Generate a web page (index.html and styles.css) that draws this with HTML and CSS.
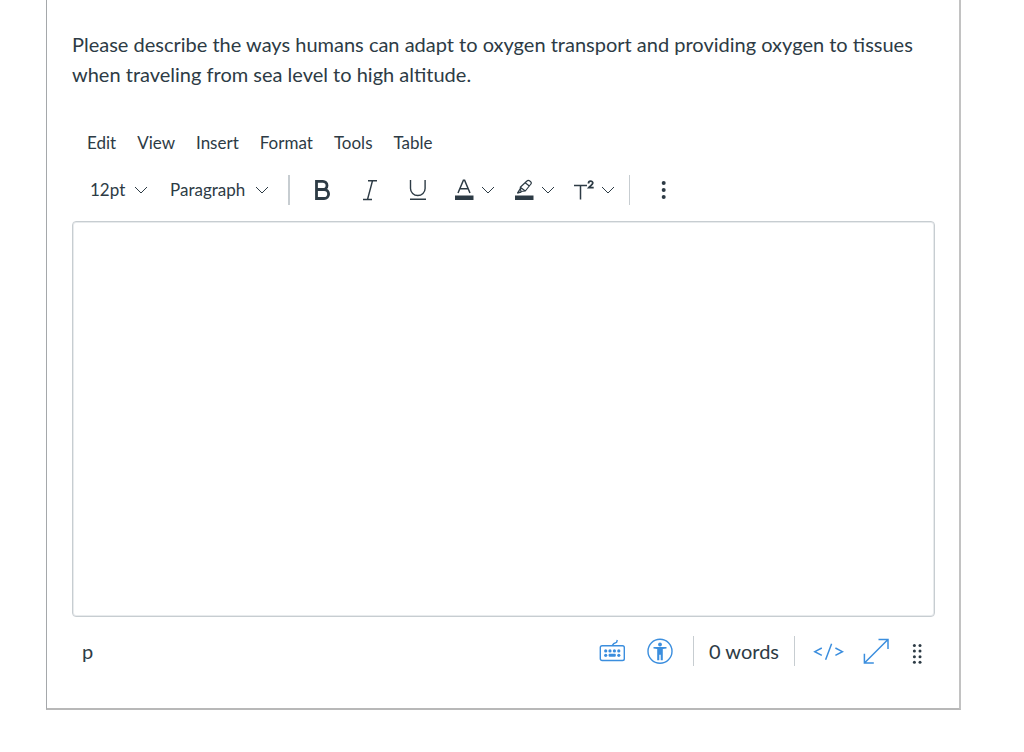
FILE: index.html
```html
<!DOCTYPE html>
<html lang="en">
<head>
    <meta charset="UTF-8">
    <meta name="viewport" content="width=device-width, initial-scale=1.0">
    <title>Essay Question</title>
    <link rel="stylesheet" href="styles.css">
</head>
<body>
    <main class="question">
        <p class="question-text" id="prompt">Please describe the ways humans can adapt to oxygen transport and providing oxygen to tissues when traveling from sea level to high altitude.</p>

        <div class="menubar">
            <button type="button">Edit</button>
            <button type="button">View</button>
            <button type="button">Insert</button>
            <button type="button">Format</button>
            <button type="button">Tools</button>
            <button type="button">Table</button>
        </div>

        <div class="toolbar">
            <label class="picker picker-size">
                <select aria-label="Font size">
                    <option>10pt</option>
                    <option selected>12pt</option>
                    <option>14pt</option>
                    <option>18pt</option>
                </select>
                <svg class="chevron" width="14" height="8" viewBox="0 0 14 8"><path d="M1 1l6 6 6-6"/></svg>
            </label>
            <label class="picker picker-block">
                <select aria-label="Block style">
                    <option selected>Paragraph</option>
                    <option>Heading 2</option>
                    <option>Heading 3</option>
                </select>
                <svg class="chevron" width="14" height="8" viewBox="0 0 14 8"><path d="M1 1l6 6 6-6"/></svg>
            </label>

            <span class="divider divider-wide"></span>

            <button type="button" class="tool" aria-label="Bold">
                <svg width="20" height="22" viewBox="0 0 20 22"><path d="M4.5 2.3h6.4a4 4 0 0 1 0 8.2H4.5zM4.5 10.5h7.6a4.4 4.4 0 0 1 0 9H4.5z" fill="none" stroke="#2d3b45" stroke-width="2.8"/></svg>
            </button>
            <button type="button" class="tool" aria-label="Italic">
                <svg width="20" height="22" viewBox="0 0 20 22"><path d="M8 1.7h9M3 20.5h9M12.5 1.7l-5 18.8" fill="none" stroke="#2d3b45" stroke-width="1.4"/></svg>
            </button>
            <button type="button" class="tool" aria-label="Underline">
                <svg width="20" height="22" viewBox="0 0 20 22"><path d="M2.5 1v8.5a7.3 7 0 0 0 14.6 0V1M2 20.3h16" fill="none" stroke="#2d3b45" stroke-width="1.4"/></svg>
            </button>

            <button type="button" class="tool-split" aria-label="Text color">
                <svg width="20" height="22" viewBox="0 0 20 22"><path d="M4 14L9.4 1.3h1.2L16 14M6 9.7h8" fill="none" stroke="#2d3b45" stroke-width="1.5"/><path d="M1 16.5h18.5V21H1z" fill="#2d3b45"/></svg>
                <svg class="chevron" width="14" height="8" viewBox="0 0 14 8"><path d="M1 1l6 6 6-6"/></svg>
            </button>
            <button type="button" class="tool-split" aria-label="Highlight color">
                <svg width="20" height="22" viewBox="0 0 20 22"><path d="M6.3 8.2l6.6-6.2c1.7-1.7 5.6 1.1 4 3L11.3 12l-4.4.5zM6.3 8.2l5 3.8M11.2 3.8l4.4 3.4M6.3 9.6l-2.6 4.2 3.7-.7" fill="none" stroke="#2d3b45" stroke-width="1.2" stroke-linejoin="round"/><path d="M3 14.4l1.6-2.6 2.2 2z" fill="#2d3b45"/><path d="M1 16.5h18.5V21H1z" fill="#2d3b45"/></svg>
                <svg class="chevron" width="14" height="8" viewBox="0 0 14 8"><path d="M1 1l6 6 6-6"/></svg>
            </button>
            <button type="button" class="tool-split" aria-label="Superscript">
                <svg width="20" height="22" viewBox="0 0 20 22"><path d="M0 6.6h13M6.5 6.6v13.8" fill="none" stroke="#2d3b45" stroke-width="1.5"/><path d="M14.5 4.4c0-3 4.3-2.8 4.3-.4 0 1.7-2.7 2.9-4.1 4.7h5" fill="none" stroke="#2d3b45" stroke-width="1.8"/></svg>
                <svg class="chevron" width="14" height="8" viewBox="0 0 14 8"><path d="M1 1l6 6 6-6"/></svg>
            </button>

            <span class="divider"></span>

            <button type="button" class="tool" aria-label="More">
                <svg width="6" height="20" viewBox="0 0 6 20" fill="#2d3b45"><circle cx="3.7" cy="3" r="2"/><circle cx="3.7" cy="10" r="2"/><circle cx="3.7" cy="17" r="2"/></svg>
            </button>
        </div>

        <textarea class="editor" aria-labelledby="prompt"></textarea>

        <div class="statusbar">
            <span class="path">p</span>
            <button type="button" class="tool" aria-label="Keyboard shortcuts">
                <svg width="26" height="26" viewBox="0 0 26 26" class="blue"><rect x="1.3" y="7.7" width="24" height="14.8" rx="1.8" fill="none" stroke-width="1.4"/><path d="M13.3 7.5l1.5-2 2.8-1.2L18.3 2" fill="none" stroke-width="1.4"/><g class="fill"><circle cx="6.7" cy="12.9" r="1.6"/><circle cx="11" cy="12.9" r="1.6"/><circle cx="15.4" cy="12.9" r="1.6"/><circle cx="19.8" cy="12.9" r="1.6"/><circle cx="6.7" cy="17.3" r="1.6"/><rect x="9.6" y="15.8" width="7.2" height="3" rx="1"/><circle cx="19.8" cy="17.3" r="1.6"/></g></svg>
            </button>
            <button type="button" class="tool" aria-label="Accessibility checker">
                <svg width="26" height="26" viewBox="0 0 26 26" class="blue"><circle cx="13" cy="13.3" r="12" fill="none" stroke-width="1.4"/><circle cx="13" cy="6.5" r="1.9" class="fill"/><path d="M6.5 9h13v1.4l-3.7.7v11.2h-2.1v-5.6h-1.4v5.6h-2.1V11.1l-3.7-.7z" class="fill"/></svg>
            </button>
            <span class="divider"></span>
            <span class="words">0 words</span>
            <span class="divider"></span>
            <button type="button" class="tool" aria-label="HTML editor">
                <svg width="32" height="18" viewBox="0 0 32 18" class="blue"><path d="M9.8 6L2.8 9.7l7 3.7M19.6 1.7l-6 16M23.4 6l7 3.7-7 3.7" fill="none" stroke-width="1.5"/></svg>
            </button>
            <button type="button" class="tool" aria-label="Fullscreen">
                <svg width="26" height="26" viewBox="0 0 26 26" class="blue"><path d="M1.7 24.8l23-23M15.5 1.5h9.5v9.5M1.4 15.7v9.4h9.4" fill="none" stroke-width="1.5"/></svg>
            </button>
            <button type="button" class="resize" aria-label="Resize">
                <svg width="10" height="22" viewBox="0 0 10 22" fill="#2d3b45"><circle cx="2.4" cy="3.4" r="1.5"/><circle cx="8" cy="3.4" r="1.5"/><circle cx="2.4" cy="9" r="1.5"/><circle cx="8" cy="9" r="1.5"/><circle cx="2.4" cy="14.7" r="1.5"/><circle cx="8" cy="14.7" r="1.5"/><circle cx="2.4" cy="20.3" r="1.5"/><circle cx="8" cy="20.3" r="1.5"/></svg>
            </button>
        </div>
    </main>
</body>
</html>
```
FILE: styles.css
```css
* {
    box-sizing: border-box;
}
body {
    margin: 0;
    background: #ffffff;
    color: #2d3b45;
    font-family: Lato, "Liberation Sans", sans-serif;
    font-size: 20px;
}
button, select {
    background: none;
    border: none;
    padding: 0;
    margin: 0;
    color: inherit;
    font-family: inherit;
    cursor: pointer;
}
svg {
    display: block;
    flex: none;
}
.question {
    margin: 0 63px 0 46px;
    padding: 29px 24px 42px 25px;
    border: solid #c2c2c2;
    border-width: 0 2px 2px 1px;
    border-left-color: #a5a8ab;
    border-bottom-color: #b8b8b8;
}
.question-text {
    margin: 0 0 39px;
    line-height: 30px;
}
.menubar {
    display: flex;
    gap: 21px;
    padding-left: 15px;
}
.menubar button {
    font-size: 17px;
    line-height: 30px;
}
.toolbar {
    display: flex;
    align-items: center;
    height: 46px;
    margin: 9px 0 8px;
    padding-left: 18px;
}
.picker {
    position: relative;
    margin-right: 22px;
}
.picker select {
    appearance: none;
    width: 100%;
    font-size: 17px;
    line-height: 30px;
}
.picker .chevron {
    position: absolute;
    right: 0;
    top: 11px;
    pointer-events: none;
}
.picker-size {
    width: 58px;
}
.picker-block {
    width: 99px;
    margin-right: 19px;
}
.chevron {
    fill: none;
    stroke: #2d3b45;
    stroke-width: 1;
}
.divider {
    width: 1px;
    height: 30px;
    margin: 0 9px 0 7px;
    background: #c7cdd1;
}
.divider-wide {
    width: 2px;
    margin: 0 8px 0 0;
}
.tool {
    display: flex;
    align-items: center;
    justify-content: center;
    width: 48px;
    height: 30px;
}
.tool-split {
    display: flex;
    align-items: center;
    gap: 7px;
    width: 60px;
    height: 30px;
    padding-left: 12px;
}
.editor {
    display: block;
    width: 100%;
    height: 396px;
    padding: 12px;
    border: 1px solid #c7cdd1;
    border-radius: 4px;
    box-shadow: inset 0 0 0 1px #e8ebed;
    resize: none;
    color: inherit;
    font: inherit;
}
.statusbar {
    display: flex;
    align-items: center;
    height: 30px;
    margin-top: 19px;
    padding: 0 13px 0 10px;
}
.path {
    margin-right: auto;
}
.statusbar .divider {
    margin: 0 9px;
}
.words {
    margin: 0 6px;
}
.blue {
    stroke: #3b8ede;
}
.blue .fill {
    fill: #3b8ede;
    stroke: none;
}
.resize {
    margin-left: 12px;
    padding-top: 4px;
}
```
